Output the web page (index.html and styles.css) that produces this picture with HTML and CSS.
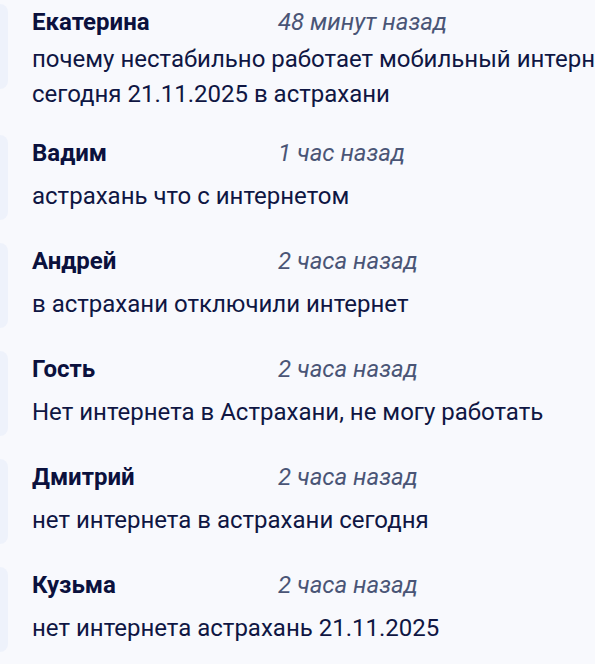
FILE: index.html
```html
<!DOCTYPE html>
<html lang="ru">
<head>
<meta charset="utf-8">
<title>Комментарии</title>
<link rel="stylesheet" href="styles.css">
</head>
<body>
<div class="viewport">
  <ul class="comments">
    <li class="comment">
      <div class="avatar"></div>
      <div class="content">
        <div class="head"><span class="name">Екатерина</span><span class="time">48 минут назад</span></div>
        <p class="text">почему нестабильно работает мобильный интернет сегодня 21.11.2025 в астрахани</p>
      </div>
    </li>
    <li class="comment">
      <div class="avatar"></div>
      <div class="content">
        <div class="head"><span class="name">Вадим</span><span class="time">1 час назад</span></div>
        <p class="text">астрахань что с интернетом</p>
      </div>
    </li>
    <li class="comment">
      <div class="avatar"></div>
      <div class="content">
        <div class="head"><span class="name">Андрей</span><span class="time">2 часа назад</span></div>
        <p class="text">в астрахани отключили интернет</p>
      </div>
    </li>
    <li class="comment">
      <div class="avatar"></div>
      <div class="content">
        <div class="head"><span class="name">Гость</span><span class="time">2 часа назад</span></div>
        <p class="text">Нет интернета в Астрахани, не могу работать</p>
      </div>
    </li>
    <li class="comment">
      <div class="avatar"></div>
      <div class="content">
        <div class="head"><span class="name">Дмитрий</span><span class="time">2 часа назад</span></div>
        <p class="text">нет интернета в астрахани сегодня</p>
      </div>
    </li>
    <li class="comment">
      <div class="avatar"></div>
      <div class="content">
        <div class="head"><span class="name">Кузьма</span><span class="time">2 часа назад</span></div>
        <p class="text">нет интернета астрахань 21.11.2025</p>
      </div>
    </li>
  </ul>
</div>
</body>
</html>
```
FILE: styles.css
```css
html, body {
  margin: 0;
  padding: 0;
  background: #f8f9fd;
  overflow: hidden;
}

body {
  font-family: Roboto, "Noto Sans", "Liberation Sans", sans-serif;
  color: #0d1441;
}

.viewport {
  width: 595px;
  height: 664px;
  overflow: hidden;
}

.comments {
  list-style: none;
  margin: 0;
  padding: 4px 0 0 0;
  display: flex;
  flex-direction: column;
  gap: 23px;
}

.comment {
  display: flex;
  align-items: flex-start;
  gap: 24px;
  margin-left: -48px;
}

.avatar {
  flex: 0 0 56px;
  height: 85px;
  border-radius: 8px;
  background: #eef2fb;
}

.content {
  flex: 0 0 640px;
  display: flex;
  flex-direction: column;
  min-height: 85px;
  box-sizing: border-box;
  padding: 6px 0 0;
}

.head {
  display: grid;
  grid-template-columns: 246px auto;
  align-items: baseline;
  line-height: 24px;
  margin-bottom: 8px;
}

.name {
  font-size: 24px;
  font-weight: 700;
  color: #0b113d;
}

.time {
  font-size: 24px;
  font-style: italic;
  color: #4a5576;
}

.text {
  margin: auto 0;
  font-size: 24px;
  line-height: 35px;
  color: #0f1643;
}
```
